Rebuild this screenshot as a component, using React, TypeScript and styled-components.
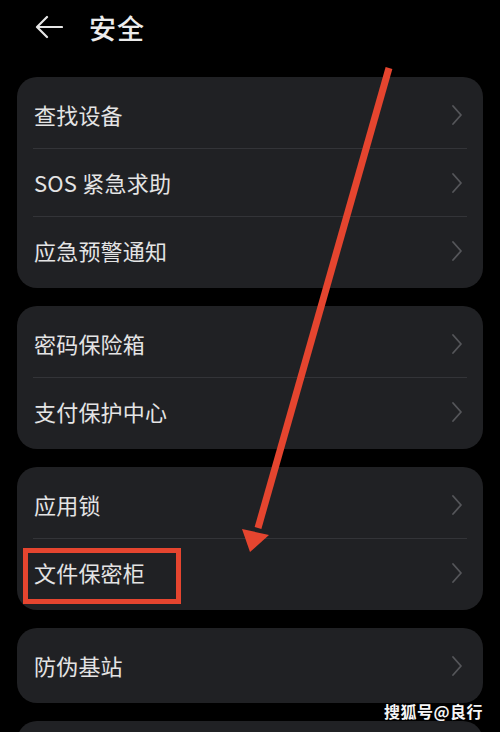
import React from "react";
import styled, { createGlobalStyle } from "styled-components";

const GlobalStyle = createGlobalStyle`
  html, body {
    margin: 0;
    padding: 0;
    background: #000;
  }
  body {
    font-family: "Noto Sans CJK SC", "Noto Sans", sans-serif;
  }
`;

const Screen = styled.div`
  position: relative;
  width: 500px;
  height: 732px;
  overflow: hidden;
  background: #000;
  color: #e6e6e6;
`;

const Header = styled.header`
  display: flex;
  align-items: center;
  height: 54px;
  padding: 0 0 0 35px;
  gap: 26px;
`;

const Title = styled.h1`
  margin: 0;
  font-size: 27px;
  font-weight: 500;
  color: #ececec;
  letter-spacing: 1px;
`;

const List = styled.div`
  display: flex;
  flex-direction: column;
  gap: 18px;
  padding: 23px 17px 0;
`;

const Card = styled.section`
  background: #202124;
  border-radius: 20px;
  padding: 4px 0;
  min-height: 67px;
`;

const Row = styled.div<{ $divider?: boolean }>`
  position: relative;
  display: flex;
  align-items: center;
  justify-content: space-between;
  height: 67px;
  margin: 0 16px;
  padding: 0 4px 0 1px;
  border-top: ${(p) => (p.$divider ? "1px solid #333438" : "none")};
`;

const Label = styled.span`
  font-size: 22px;
  color: #e4e4e4;
  letter-spacing: 0.2px;
  padding-bottom: 1px;
`;

const Highlight = styled.span`
  position: absolute;
  left: -10px;
  top: 9px;
  width: 148px;
  height: 46px;
  border: 5px solid #e5452f;
`;

const Watermark = styled.div`
  position: absolute;
  right: 17px;
  bottom: 9px;
  font-size: 16px;
  font-weight: 700;
  color: #f5f5f5;
  letter-spacing: 0.5px;
  text-shadow: 0 0 3px rgba(0, 0, 0, 0.8);
`;

const Overlay = styled.svg`
  position: absolute;
  left: 0;
  top: 0;
  pointer-events: none;
`;

const Chevron = () => (
  <svg width="12" height="22" viewBox="0 0 12 22">
    <path
      d="M2 2 L10 11 L2 20"
      fill="none"
      stroke="#55565a"
      strokeWidth="1.8"
      strokeLinecap="round"
      strokeLinejoin="round"
    />
  </svg>
);

const BackArrow = () => (
  <svg width="28" height="24" viewBox="0 0 28 24">
    <path
      d="M27 12 H3 M12 2 L2 12 L12 22"
      fill="none"
      stroke="#e6e6e6"
      strokeWidth="2.2"
      strokeLinecap="round"
      strokeLinejoin="round"
    />
  </svg>
);

const groups: string[][] = [
  ["查找设备", "SOS 紧急求助", "应急预警通知"],
  ["密码保险箱", "支付保护中心"],
  ["应用锁", "文件保密柜"],
  ["防伪基站"],
  [],
];

export default function App() {
  return (
    <Screen>
      <GlobalStyle />
      <Header>
        <BackArrow />
        <Title>安全</Title>
      </Header>

      <List>
        {groups.map((items, gi) => (
          <Card key={gi}>
            {items.map((item, i) => (
              <Row key={item} $divider={i > 0}>
                <Label>{item}</Label>
                <Chevron />
                {item === "文件保密柜" && <Highlight />}
              </Row>
            ))}
          </Card>
        ))}
      </List>

      <Overlay width="500" height="732" viewBox="0 0 500 732">
        <line
          x1="389"
          y1="68"
          x2="258"
          y2="528"
          stroke="#e5452f"
          strokeWidth="7"
        />
        <polygon points="250,552 242,529 269,535" fill="#e5452f" />
      </Overlay>

      <Watermark>搜狐号@良行</Watermark>
    </Screen>
  );
}
